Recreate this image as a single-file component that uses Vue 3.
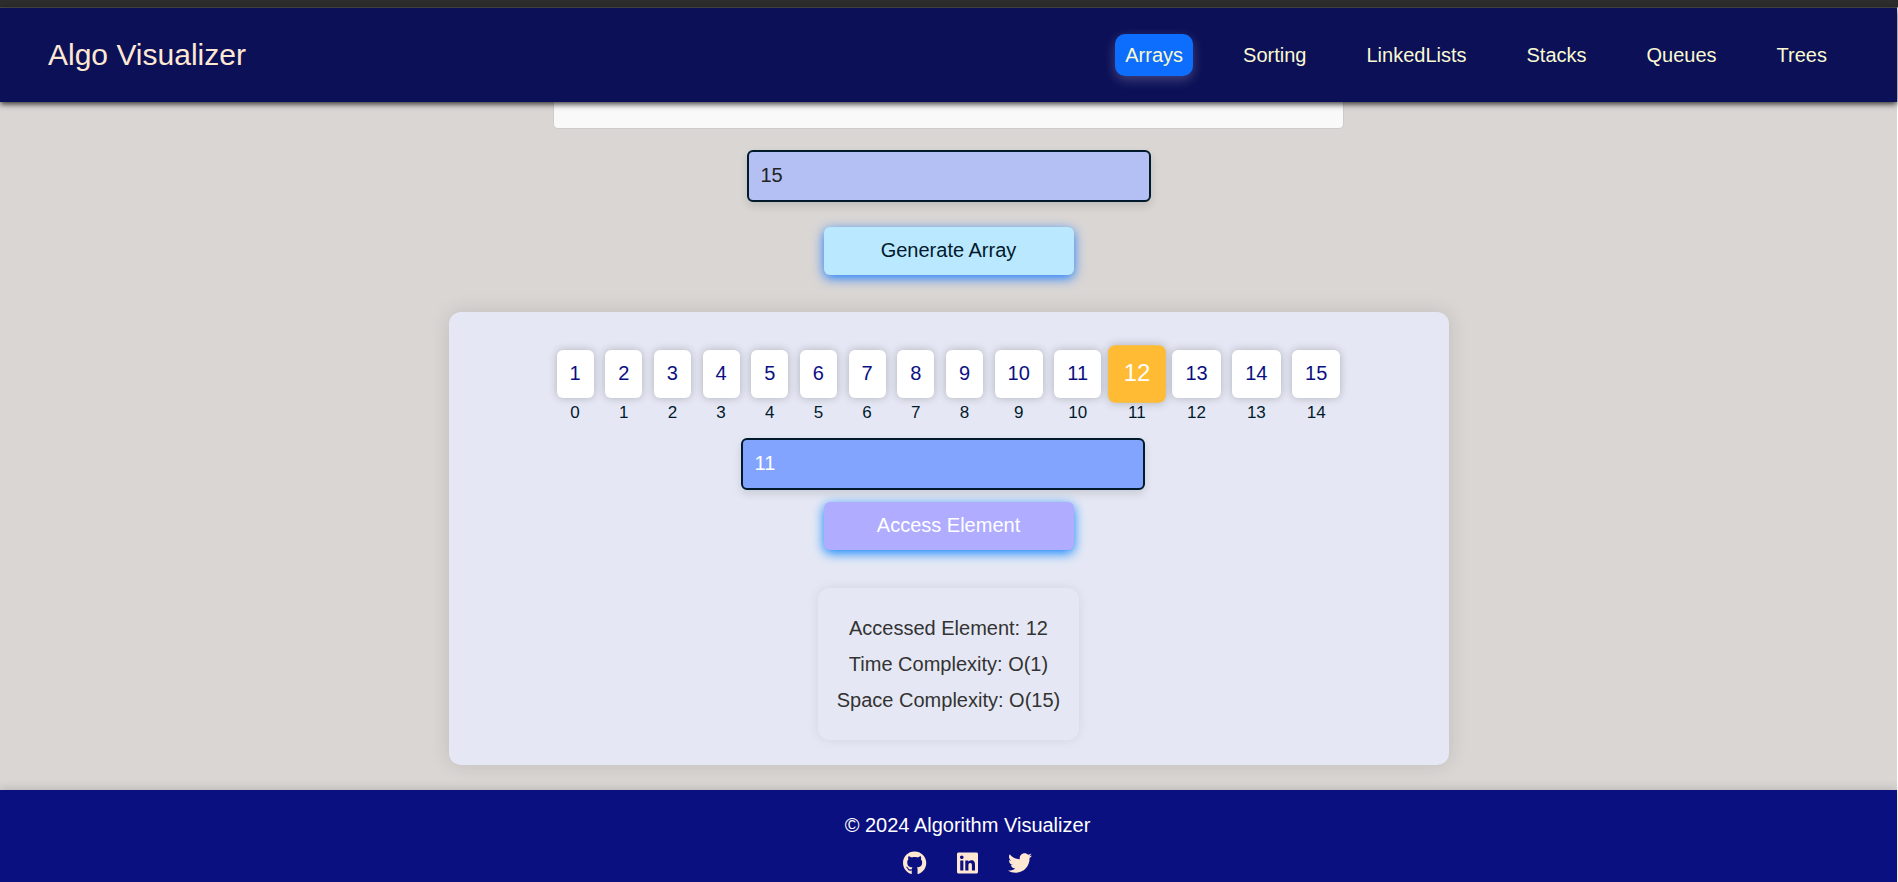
<script setup>
import { ref } from 'vue'

const links = ['Arrays', 'Sorting', 'LinkedLists', 'Stacks', 'Queues', 'Trees']
const activeLink = ref('Arrays')
const size = ref('15')
const index = ref('11')
const items = ref(Array.from({ length: 15 }, (_, i) => i + 1))
const accessed = ref(11)

function generate() {
  const count = Math.max(0, Math.floor(Number(size.value) || 0))
  items.value = Array.from({ length: count }, (_, i) => i + 1)
  accessed.value = -1
}

function access() {
  accessed.value = Number(index.value)
}
</script>

<template>
  <div class="window">
    <div class="page">
      <header class="navbar">
        <span class="brand">Algo Visualizer</span>
        <nav class="links">
          <a
            v-for="link in links"
            :key="link"
            href="#"
            :class="{ active: link === activeLink }"
            @click.prevent="activeLink = link"
          >{{ link }}</a>
        </nav>
      </header>

      <main class="content">
        <div class="description"></div>
        <input v-model="size" class="field size-field" type="text" inputmode="numeric" aria-label="Array size" />
        <button class="btn generate" type="button" @click="generate">Generate Array</button>

        <section class="panel">
          <div class="array">
            <div v-for="(item, i) in items" :key="item" class="item">
              <div class="cell" :class="{ highlighted: i === accessed }">{{ item }}</div>
              <div class="index">{{ i }}</div>
            </div>
          </div>
          <input v-model="index" class="field index-field" type="text" inputmode="numeric" aria-label="Index" />
          <button class="btn access" type="button" @click="access">Access Element</button>
          <div class="result">
            <p>Accessed Element: {{ items[accessed] }}</p>
            <p>Time Complexity: O(1)</p>
            <p>Space Complexity: O({{ items.length }})</p>
          </div>
        </section>
      </main>

      <footer class="footer">
        <p>© 2024 Algorithm Visualizer</p>
        <div class="social">
          <a href="#" aria-label="GitHub">
            <svg viewBox="0 0 496 512"><path d="M165.900 397.400c0 2-2.300 3.600-5.200 3.600-3.300.3-5.600-1.300-5.600-3.600 0-2 2.300-3.600 5.200-3.600 3-.3 5.600 1.300 5.600 3.600zm-31.100-4.500c-.7 2 1.300 4.300 4.300 4.900 2.600 1 5.600 0 6.200-2s-1.300-4.300-4.300-5.200c-2.600-.7-5.500.3-6.200 2.300zm44.200-1.700c-2.900.7-4.900 2.600-4.600 4.900.3 2 2.900 3.300 5.900 2.600 2.900-.7 4.900-2.600 4.600-4.600-.3-1.900-3-3.200-5.900-2.900zM244.800 8C106.100 8 0 113.300 0 252c0 110.900 69.800 205.800 169.500 239.200 12.800 2.300 17.300-5.600 17.300-12.100 0-6.200-.3-40.400-.3-61.400 0 0-70 15-84.700-29.800 0 0-11.400-29.100-27.800-36.600 0 0-22.900-15.700 1.600-15.400 0 0 24.900 2 38.600 25.800 21.900 38.600 58.600 27.500 72.900 20.900 2.300-16 8.800-27.100 16-33.700-55.900-6.200-112.300-14.300-112.300-110.500 0-27.500 7.600-41.300 23.600-58.900-2.600-6.500-11.100-33.300 2.600-67.900 20.900-6.500 69 27 69 27 20-5.600 41.500-8.500 62.800-8.500s42.800 2.900 62.800 8.500c0 0 48.100-33.600 69-27 13.700 34.700 5.200 61.400 2.600 67.900 16 17.700 25.800 31.500 25.800 58.900 0 96.500-58.900 104.200-114.800 110.500 9.200 7.900 17 22.900 17 46.400 0 33.700-.3 75.400-.3 83.600 0 6.500 4.600 14.400 17.300 12.100C428.200 457.800 496 362.900 496 252 496 113.300 383.500 8 244.800 8zM97.200 352.900c-1.300 1-1 3.300.7 5.200 1.600 1.600 3.900 2.300 5.200 1 1.300-1 1-3.300-.7-5.200-1.600-1.600-3.900-2.300-5.200-1zm-10.800-8.100c-.7 1.300.3 2.900 2.300 3.900 1.600 1 3.600.7 4.300-.7.7-1.300-.3-2.900-2.300-3.900-2-.6-3.600-.3-4.300.7zm32.400 35.600c-1.600 1.300-1 4.300 1.300 6.200 2.300 2.300 5.200 2.600 6.500 1 1.300-1.300.7-4.300-1.300-6.200-2.200-2.300-5.200-2.600-6.500-1zm-11.400-14.700c-1.600 1-1.600 3.600 0 5.900 1.600 2.300 4.300 3.300 5.600 2.300 1.600-1.300 1.600-3.900 0-6.200-1.400-2.300-4-3.300-5.600-2z" /></svg>
          </a>
          <a href="#" aria-label="LinkedIn">
            <svg viewBox="0 0 448 512"><path d="M416 32H31.900C14.300 32 0 46.500 0 64.300v383.400C0 465.500 14.300 480 31.900 480H416c17.600 0 32-14.500 32-32.300V64.300c0-17.800-14.400-32.300-32-32.300zM135.400 416H69V202.200h66.500V416zm-33.200-243c-21.300 0-38.500-17.300-38.500-38.500S80.900 96 102.200 96c21.200 0 38.500 17.300 38.500 38.500 0 21.300-17.200 38.500-38.500 38.500zm282.100 243h-66.400V312c0-24.800-.5-56.700-34.500-56.700-34.600 0-39.900 27-39.900 54.900V416h-66.400V202.200h63.700v29.200h.9c8.900-16.800 30.600-34.500 62.900-34.500 67.200 0 79.700 44.300 79.700 101.900V416z" /></svg>
          </a>
          <a href="#" aria-label="Twitter">
            <svg viewBox="0 0 512 512"><path d="M459.370 151.716c.325 4.548.325 9.097.325 13.645 0 138.720-105.583 298.558-298.558 298.558-59.452 0-114.680-17.219-161.137-47.106 8.447.974 16.568 1.299 25.340 1.299 49.055 0 94.213-16.568 130.274-44.832-46.132-.975-84.792-31.188-98.112-72.772 6.498.974 12.995 1.624 19.818 1.624 9.421 0 18.843-1.300 27.614-3.573-48.081-9.747-84.143-51.980-84.143-102.985v-1.299c13.969 7.797 30.214 12.670 47.431 13.319-28.264-18.843-46.781-51.005-46.781-87.391 0-19.492 5.197-37.360 14.294-52.954 51.655 63.675 129.300 105.258 216.365 109.807-1.624-7.797-2.599-15.918-2.599-24.040 0-57.828 46.782-104.934 104.934-104.934 30.213 0 57.502 12.670 76.670 33.137 23.715-4.548 46.456-13.320 66.599-25.340-7.798 24.366-24.366 44.833-46.132 57.827 21.117-2.273 41.584-8.122 60.426-16.243-14.292 20.791-32.161 39.308-52.628 54.253z" /></svg>
          </a>
        </div>
      </footer>
    </div>
  </div>
</template>

<style>
body {
  background: #dad6d4;
}
</style>

<style scoped>
.window {
  display: flex;
  flex-direction: column;
  box-sizing: border-box;
  min-height: 100vh;
  padding-top: 7px;
  background: #2d2d2d;
}

.page {
  display: flex;
  flex: 1;
  flex-direction: column;
  border-top: 1px solid #4b4f49;
  border-right: 1px solid #fff;
  background: #dad6d4;
  font-family: "Liberation Sans", Arial, sans-serif;
  font-size: 20px;
}

.navbar {
  position: relative;
  display: flex;
  align-items: center;
  justify-content: space-between;
  box-sizing: border-box;
  height: 94px;
  padding: 0 60px 0 48px;
  background: #0c1057;
  box-shadow: 0 2px 6px rgba(0, 0, 0, 0.8);
}

.brand {
  color: #ffe8d3;
  font-size: 30px;
  line-height: 36px;
}

.links {
  display: flex;
  gap: 40px;
}

.links a {
  padding: 9px 10px;
  border-radius: 10px;
  color: #fafad2;
  line-height: 24px;
  text-decoration: none;
}

.links a.active {
  background: #0d6efd;
  box-shadow: 0 4px 12px rgba(255, 255, 255, 0.22);
}

.content {
  display: flex;
  flex-direction: column;
  align-items: center;
  padding: 0 20px 25px;
}

.description {
  box-sizing: border-box;
  width: 100%;
  max-width: 791px;
  height: 27px;
  border: 1px solid #ccc;
  border-top: 0;
  border-radius: 0 0 5px 5px;
  background: #f9f9f9;
}

.field {
  box-sizing: border-box;
  width: 404px;
  max-width: 100%;
  height: 52px;
  padding: 0 12px 2px;
  border: 2px solid #001a2c;
  border-radius: 6px;
  box-shadow: 0 4px 8px rgba(0, 0, 0, 0.12);
  font: inherit;
}

.size-field {
  margin-top: 21px;
  background: #b4c0f3;
  color: #222;
}

.index-field {
  margin: 16px 12px 0 0;
  background: #82a4ff;
  color: #fff;
}

.btn {
  width: 250px;
  height: 48px;
  padding: 0 0 1px;
  border: 0;
  border-radius: 6px;
  font: inherit;
}

.generate {
  margin-top: 25px;
  background: #bae8ff;
  color: #001a2c;
  box-shadow: 0 3px 12px #1a7cff;
}

.access {
  margin-top: 12px;
  background: #b0acff;
  color: #fff;
  box-shadow: 0 3px 12px #0a84ff;
}

.panel {
  display: flex;
  flex-direction: column;
  align-items: center;
  box-sizing: border-box;
  width: 100%;
  max-width: 1000px;
  margin-top: 37px;
  padding: 38px 20px 25px;
  border-radius: 12px;
  background: #e5e8f4;
  box-shadow: 0 0 20px rgba(0, 0, 0, 0.12);
}

.array {
  display: flex;
  flex-wrap: wrap;
  justify-content: space-between;
  gap: 10px;
  width: 100%;
  max-width: 784px;
}

.item {
  display: flex;
  flex-direction: column;
  align-items: center;
}

.cell {
  padding: 0 13px 2px;
  border-radius: 6px;
  background: #fff;
  color: #0b1081;
  line-height: 46px;
  box-shadow: 0 0 8px rgba(0, 0, 0, 0.24);
}

.cell.highlighted {
  background: #ffbb33;
  color: #fff;
  transform: scale(1.2);
}

.index {
  margin-top: 6px;
  color: #001a2c;
  font-size: 17px;
  line-height: 18px;
}

.result {
  margin-top: 38px;
  padding: 22px 19px;
  border-radius: 12px;
  color: #333;
  text-align: center;
  box-shadow: 0 0 12px rgba(0, 0, 0, 0.08);
}

.result p {
  margin: 0;
  line-height: 36px;
}

.footer {
  display: flex;
  flex: 1;
  flex-direction: column;
  align-items: center;
  gap: 14px;
  padding: 23px 0 7px 38px;
  background: #0b1081;
  color: #fff;
  box-shadow: 0 0 10px rgba(0, 0, 0, 0.2);
}

.footer p {
  margin: 0;
  line-height: 24px;
}

.social {
  display: flex;
  gap: 30px;
}

.social a {
  color: #ffe8d3;
}

.social svg {
  display: block;
  height: 24px;
  fill: currentColor;
}
</style>
